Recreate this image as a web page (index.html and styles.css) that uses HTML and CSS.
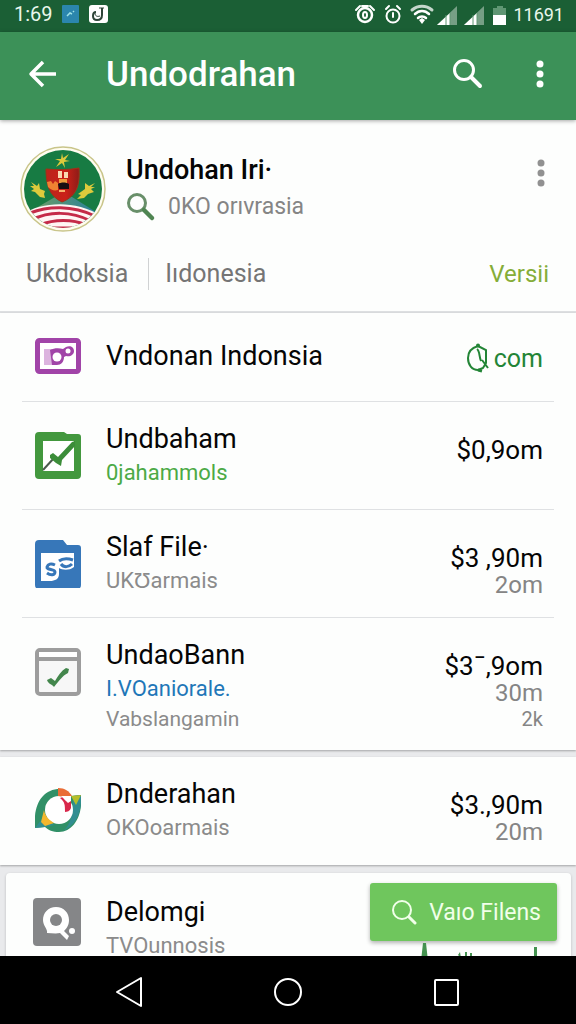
FILE: index.html
```html
<!DOCTYPE html>
<html lang="id">
<head>
    <meta charset="UTF-8">
    <meta name="viewport" content="width=device-width, initial-scale=1.0">
    <title>Undodrahan</title>
    <link rel="stylesheet" href="styles.css">
</head>
<body>
    <div class="status-bar">
        <span class="clock">1:69</span>
        <svg class="status-left" width="50" height="20" viewBox="0 0 50 20">
            <rect x="1" y="1" width="17" height="18" rx="1" fill="#2b86ad"/>
            <path d="M6 12l3-3 2 1M12 8l1-1" stroke="#9fe3e6" stroke-width="1.5" fill="none"/>
            <rect x="28" y="1" width="19" height="18" rx="3" fill="#fff"/>
            <path d="M41 4v7c0 3-2 5-5 5s-4-2-4-4 1-4 3-4" stroke="#2d4438" stroke-width="2" fill="none"/>
            <path d="M34 9c0 3 2 4 5 3M38 4h5" stroke="#2d4438" stroke-width="1" fill="none"/>
        </svg>
        <svg class="status-right" width="154" height="24" viewBox="0 0 154 24">
            <g fill="none" stroke="#fff" stroke-linecap="round">
                <circle cx="12" cy="13" r="7" stroke-width="2.5"/>
                <path d="M3 8l4-4M21 8l-4-4M9 4h6" stroke-width="2"/>
                <ellipse cx="12" cy="13" rx="2" ry="3" stroke-width="2"/>
                <circle cx="40" cy="14" r="6.500" stroke-width="2"/>
                <path d="M33 7l3-3M47 7l-3-3M40 11v4" stroke-width="2"/>
                <path d="M59 8c6-5 14-5 20 0" stroke-width="3" opacity=".75"/>
                <path d="M62 12c4-4 10-4 14 0M65 16c2-2 6-2 8 0" stroke-width="2.500"/>
            </g>
            <path d="M66 18l3-2 3 2-3 4z" fill="#fff"/>
            <path d="M104 4v19H84z" fill="#fff" opacity=".4"/>
            <path d="M97 11v12H84z" fill="#fff"/>
            <path d="M93 13v10M97 11v12" stroke="#5f9673" stroke-width="1"/>
            <path d="M131 4v19h-20z" fill="#fff" opacity=".4"/>
            <path d="M124 11v12h-13z" fill="#fff"/>
            <path d="M120 13v10M124 11v12" stroke="#5f9673" stroke-width="1"/>
            <path d="M140 6h4V4h6v2h3v8h-13z" fill="#5f9673"/>
            <path d="M140 13h13v10h-13z" fill="#fff"/>
        </svg>
        <span class="battery">11691</span>
    </div>

    <header class="app-bar">
        <button class="icon-btn" type="button" aria-label="Back">
            <svg width="30" height="30" viewBox="0 0 30 30" fill="none" stroke="#fff" stroke-width="3.500" stroke-linecap="round" stroke-linejoin="round"><path d="M15 3L3 15l12 12M4 15h24" stroke-linecap="butt"/></svg>
        </button>
        <h1>Undodrahan</h1>
        <button class="icon-btn" type="button" aria-label="Search">
            <svg width="32" height="32" viewBox="0 0 32 32" fill="none" stroke="#fff" stroke-linecap="round"><circle cx="12" cy="12" r="9.500" stroke-width="3"/><path d="M19 19l9 9" stroke-width="4"/></svg>
        </button>
        <button class="icon-btn more" type="button" aria-label="More options">
            <svg width="10" height="30" viewBox="0 0 10 30" fill="#fff"><circle cx="5" cy="5" r="3.500"/><circle cx="5" cy="15" r="3.500"/><circle cx="5" cy="25" r="3.500"/></svg>
        </button>
    </header>

    <main>
        <section class="profile">
            <div class="profile-top">
                <svg class="avatar" width="86" height="88" viewBox="0 0 86 88">
                    <defs>
                        <clipPath id="disc"><circle cx="43" cy="43" r="39"/></clipPath>
                        <linearGradient id="hill" x1="0" y1="0" x2="1" y2="0"><stop offset="0" stop-color="#6f9e62"/><stop offset="1" stop-color="#28819b"/></linearGradient>
                        <linearGradient id="shield" x1="0" y1="0" x2="1" y2="0"><stop offset="0" stop-color="#bb241c"/><stop offset=".6" stop-color="#cb2119"/><stop offset="1" stop-color="#8e1c18"/></linearGradient>
                    </defs>
                    <circle cx="43" cy="43" r="42" fill="#fffdf0" stroke="#c9c58a" stroke-width="1.500"/>
                    <g clip-path="url(#disc)">
                        <rect width="86" height="88" fill="#177b43"/>
                        <path d="M11 65l24-14h17l24 15v10H11z" fill="url(#hill)"/>
                        <path d="M0 70c15-12 54-20 86 3v12H0z" fill="#fff6f4"/>
                        <g fill="none" stroke="#c52b48" stroke-width="3">
                            <path d="M10 67c18-7 42-8 65 3M12 74c17-9 39-9 59 1M20 79c14-6 33-6 46 0"/>
                        </g>
                        <path d="M32 82h20" stroke="#c52b48" stroke-width="3"/>
                    </g>
                    <path d="M26 23c11 1 22 1 33-1 1 17-2 28-17 34-13-6-16-18-16-33z" fill="url(#shield)" stroke="#a13217"/>
                    <path d="M27 36l4-1 2 3 2-3 3 2v7c-4 1-7 0-10-3z" fill="#f08232"/>
                    <path d="M38 25h4v7h-4zM44 26h4v6h-4z" fill="#f9d9b2"/>
                    <path d="M39 33h8v4h-8z" fill="#ef9c3e"/>
                    <path d="M38 38c3-2 8-2 11 0v5H39z" fill="#190e13"/>
                    <path d="M39 44h6v2h-6z" fill="#f7b16c"/>
                    <g fill="#ddca3c">
                        <path d="M42 7l1 5 6-4-4 6 5 1-6 1 1 6-3-5-6 4 4-6-5-2 6 0z"/>
                        <path d="M11 36l6 4 2-3 1 6 5 2-1 3 1 4-5-1-5-5-4-1 3-2-4-3 4 0z"/>
                        <path d="M75 37l-6 3-4-3v6l-7 5 3 1-4 4 7-1 4-4 6-2-3-3 4-2h-4z"/>
                    </g>
                </svg>
                <div class="profile-name">
                    <h2>Undohan Iri·</h2>
                    <p>
                        <svg width="30" height="30" viewBox="0 0 30 30" fill="none" stroke="#688f69" stroke-linecap="round"><circle cx="11" cy="11" r="8.500" stroke-width="3"/><path d="M18 18l8 8" stroke-width="4.500" stroke="#4f8552"/></svg>
                        <span>0KO orıvrasia</span>
                    </p>
                </div>
                <button class="icon-btn profile-more" type="button" aria-label="Profile options">
                    <svg width="10" height="30" viewBox="0 0 10 30" fill="#919191"><circle cx="5" cy="5" r="3.500"/><circle cx="5" cy="15" r="3.500"/><circle cx="5" cy="25" r="3.500"/></svg>
                </button>
            </div>
            <div class="profile-meta">
                <span>Ukdoksia</span>
                <span class="region">Iıdonesia</span>
                <a href="#">Versii</a>
            </div>
        </section>

        <ul class="list">
            <li class="item single">
                <svg class="item-icon" width="46" height="36" viewBox="0 0 46 36">
                    <rect x="2.500" y="2.500" width="41" height="31" rx="2" fill="#fff" stroke="#a144a8" stroke-width="5"/>
                    <path d="M9 11h8v16H9z" fill="#dcb4df"/>
                    <path d="M15 12c4-2 9-2 13-1l3-2c4-2 8 0 8 4s-4 6-8 5l-2 1c0 5-3 8-7 8h-5z" fill="#a144a8"/>
                    <circle cx="22" cy="19" r="4.500" fill="#fff"/>
                    <circle cx="33" cy="13" r="2.500" fill="#fff"/>
                </svg>
                <div class="item-text"><h3>Vndonan Indonsia</h3></div>
                <div class="item-value site">
                    <svg width="24" height="30" viewBox="0 0 24 30" fill="none" stroke="#238536" stroke-width="2"><path d="M12 3l8 4v13l-3 5-5 2c-6 0-10-5-10-12C2 9 5 5 12 3M11 6c3 2 2 8 4 12M16 17l6 8"/><path d="M12 27l4 1" stroke-width="3"/><circle cx="12" cy="2.500" r="1"/></svg>
                    <span>com</span>
                </div>
            </li>
            <li class="item">
                <svg class="item-icon" width="46" height="48" viewBox="0 0 46 48">
                    <path d="M4 0h25l3 2h11q3 0 3 3v38q0 4-4 4H4q-4 0-4-4V4q0-4 4-4z" fill="#43983e"/>
                    <path d="M8 9h31v30H8z" fill="#fff"/>
                    <path d="M8 38l11-12" stroke="#4b5a4d" stroke-width="2"/>
                    <path d="M15 23l3-2 5 4 14-15 3-1v5L27 28l-1 6-5-3-6-5z" fill="#3c8d3a"/>
                </svg>
                <div class="item-text">
                    <h3>Undbaham</h3>
                    <p class="green">0jahammols</p>
                </div>
                <div class="item-value"><strong>$0,9om</strong></div>
            </li>
            <li class="item">
                <svg class="item-icon" width="46" height="48" viewBox="0 0 46 48">
                    <path d="M4 0h24l4 5h11q3 0 3 3v37q0 4-4 4H4q-4 0-4-4V4q0-4 4-4z" fill="#3777b9"/>
                    <path d="M6 13h33v14c-5 4-12 3-15 1v6c0 5-4 7-9 7H6z" fill="#fff"/>
                    <path d="M20 25c-4-2-7-1-8 2s8 2 8 5-4 4-8 1" fill="none" stroke="#3777b9" stroke-width="3"/>
                    <path d="M24 21c4-3 8-3 14-1M26 24c3 4 8 3 11 0" fill="none" stroke="#3777b9" stroke-width="3"/>
                </svg>
                <div class="item-text">
                    <h3>Slaf File·</h3>
                    <p>UKƱarmais</p>
                </div>
                <div class="item-value"><strong>$3 ,90m</strong><span>2om</span></div>
            </li>
            <li class="item">
                <svg class="item-icon" width="46" height="48" viewBox="0 0 46 48">
                    <rect x="2" y="2" width="42" height="44" rx="3" fill="#f7f7f7" stroke="#9d9d9d" stroke-width="4"/>
                    <path d="M4 4h38v5H4z" fill="#fff"/>
                    <path d="M3 11h40" stroke="#9d9d9d" stroke-width="4"/>
                    <path d="M12 32l4-2 4 3c3-5 6-10 11-13l3 1-1 4c-6 3-9 8-14 14-2-3-6-3-7-7z" fill="#43864c"/>
                </svg>
                <div class="item-text">
                    <h3>UndaoBann</h3>
                    <p class="blue">I.VOaniorale.</p>
                    <p class="note">Vabslangamin</p>
                </div>
                <div class="item-value"><strong>$3¯,9om</strong><span>30m</span><small>2k</small></div>
            </li>
        </ul>

        <ul class="list">
            <li class="item">
                <svg class="item-icon" width="46" height="46" viewBox="0 0 46 46">
                    <path d="M0 41C-2 18 7 2 25 2c4 0 8 2 11 7l10-1c2 20-7 37-22 37-6 0-11-2-14-5z" fill="#319067"/>
                    <path d="M0 41l10-13 9 10-9 2zM38 9l8-1c1 18-5 30-18 36 8-6 10-17 10-35z" fill="#318e91"/>
                    <circle cx="24" cy="23" r="14" fill="#fff"/>
                    <path d="M23 1c7 0 11 3 14 8l-7 1-7-1z" fill="#e96d36"/>
                    <path d="M36 9l10-1-5 10z" fill="#b6be29"/>
                    <path d="M25 11c4-2 8-1 11 2v8c-1 3-4 4-6 4 0-7 0-10-5-14z" fill="#d8274b"/>
                    <path d="M26 9h10v5l-3 2c-2-2-4-4-7-7z" fill="#fff"/>
                    <path d="M9 23c1 6 5 10 10 13l-9 3-4-4z" fill="#f3b72d"/>
                </svg>
                <div class="item-text">
                    <h3>Dnderahan</h3>
                    <p>OKOoarmais</p>
                </div>
                <div class="item-value"><strong>$3.,90m</strong><span>20m</span></div>
            </li>
        </ul>

        <section class="card">
            <svg class="card-icon" width="48" height="48" viewBox="0 0 48 48">
                <rect width="48" height="48" rx="4" fill="#858688"/>
                <path d="M23 9c8 0 13 6 13 13 0 6-3 9-5 11l5 5-2 4-7-7c-4 1-9 0-13 0 1-4-4-7-4-13 0-7 5-13 13-13z" fill="#fff"/>
                <circle cx="23" cy="22" r="6" fill="#858688"/>
                <circle cx="39" cy="33" r="3" fill="#fff"/>
            </svg>
            <div class="item-text">
                <h3>Delomgi</h3>
                <p>TVOunnosis</p>
            </div>
            <div class="card-action">
                <button class="view-btn" type="button">
                    <svg width="26" height="28" viewBox="0 0 26 28" fill="none" stroke="#f1ffe9" stroke-linecap="round"><circle cx="11" cy="12" r="9" stroke-width="2"/><path d="M18 19l6 6" stroke-width="3"/></svg>
                    Vaıo Filens
                </button>
                <svg class="peaks" width="130" height="20" viewBox="0 0 130 20" fill="#459250"><path d="M4 20L6 2h3l2 18zM41 14l2-3 1 6zM48 11h2v9h-2zM53 12h2v8h-2zM117 6h3v14h-3z"/></svg>
            </div>
        </section>
    </main>

    <nav class="nav-bar">
        <button type="button" aria-label="Back">
            <svg width="32" height="32" viewBox="0 0 32 32" fill="none" stroke="#fff" stroke-width="2" stroke-linejoin="round"><path d="M28 2v28L4 16z"/></svg>
        </button>
        <button type="button" aria-label="Home">
            <svg width="32" height="32" viewBox="0 0 32 32" fill="none" stroke="#fff" stroke-width="2"><circle cx="16" cy="16" r="13"/></svg>
        </button>
        <button type="button" aria-label="Recent apps">
            <svg width="32" height="32" viewBox="0 0 32 32" fill="none" stroke="#fff" stroke-width="2"><rect x="4" y="4" width="23" height="25" rx="1"/></svg>
        </button>
    </nav>
</body>
</html>
```

FILE: styles.css
```css
* {
    box-sizing: border-box;
    margin: 0;
    padding: 0;
}

body {
    display: flex;
    flex-direction: column;
    height: 100vh;
    font-family: Roboto, Arial, sans-serif;
    background: #e9eaec;
    color: #050505;
}

svg {
    display: block;
    flex-shrink: 0;
}

button {
    border: none;
    background: none;
    font-family: inherit;
    cursor: pointer;
}

.status-bar {
    display: flex;
    align-items: center;
    flex-shrink: 0;
    height: 32px;
    padding: 0 12px 4px 14px;
    background: #1b5f35;
    color: #e9f7ec;
    font-size: 20px;
}

.clock {
    margin-right: 8px;
}

.status-right {
    margin-left: auto;
    margin-right: 6px;
}

.battery {
    font-size: 18px;
}

.app-bar {
    display: flex;
    align-items: center;
    flex-shrink: 0;
    height: 88px;
    padding: 0 20px 4px 28px;
    background: #3c9158;
    color: #fff;
    box-shadow: 0 1px 4px rgba(0, 0, 0, 0.35);
    z-index: 1;
}

.app-bar h1 {
    flex: 1;
    margin-left: 48px;
    font-size: 35px;
    font-weight: 500;
}

.more {
    padding: 0 11px;
    margin-left: 40px;
}

main {
    flex: 1;
    min-height: 0;
    overflow-y: auto;
    scrollbar-width: none;
}

.profile {
    background: #fdfefd;
    border-bottom: 2px solid #dddfe1;
    padding: 26px 27px 21px 20px;
}

.profile-top {
    display: flex;
}

.profile-name {
    flex: 1;
    margin-left: 20px;
    padding-top: 6px;
}

.profile-name h2 {
    font-size: 27px;
    font-weight: 500;
    line-height: 36px;
}

.profile-name p {
    display: flex;
    align-items: center;
    gap: 12px;
    font-size: 23px;
    line-height: 38px;
    color: #858585;
}

.profile-more {
    align-self: flex-start;
    padding: 12px 3px;
}

.profile-meta {
    display: flex;
    align-items: center;
    margin-top: 24px;
    padding-left: 6px;
    font-size: 25px;
    line-height: 32px;
    color: #757575;
}

.region {
    margin-left: 20px;
    padding-left: 16px;
    border-left: 1px solid #d0d2d3;
}

.profile-meta a {
    margin-left: auto;
    color: #85ad38;
    font-size: 24px;
    text-decoration: none;
}

.list {
    list-style: none;
    padding: 0 22px;
    margin-bottom: 7px;
    background: #fdfefd;
    box-shadow: 0 1px 2px rgba(0, 0, 0, 0.3);
}

.item {
    display: flex;
    min-height: 108px;
    padding: 20px 11px 18px 13px;
    border-bottom: 1px solid #dfe1e3;
}

.item:last-child {
    border-bottom: none;
}

.item.single {
    align-items: center;
    min-height: 0;
    padding-top: 25px;
    padding-bottom: 27px;
}

.item-icon {
    margin-top: 10px;
}

.single .item-icon {
    margin-top: 0;
}

.item-text {
    flex: 1;
    margin-left: 25px;
}

h3 {
    font-size: 27px;
    font-weight: 400;
    line-height: 34px;
}

.item-text p {
    font-size: 22px;
    line-height: 34px;
    color: #8b8b8b;
}

.item-text .green {
    color: #4caa46;
}

.item-text .blue {
    color: #1f77b8;
}

.item-text .note {
    font-size: 21px;
    line-height: 26px;
}

.item-value {
    display: flex;
    flex-direction: column;
    align-items: flex-end;
    padding-top: 14px;
    font-size: 24px;
    line-height: 27px;
    color: #858585;
}

.item-value strong {
    font-size: 26px;
    font-weight: 400;
    line-height: 28px;
    color: #050505;
}

.item-value small {
    font-size: 20px;
    line-height: 25px;
}

.item-value.site {
    flex-direction: row;
    align-items: center;
    gap: 4px;
    padding-top: 4px;
    font-size: 25px;
    color: #238536;
}

.card {
    display: flex;
    margin: 8px 5px 0 6px;
    padding: 22px 14px 20px 27px;
    background: #fdfefd;
    border-radius: 4px;
    box-shadow: 0 1px 3px rgba(0, 0, 0, 0.2);
}

.card-icon {
    margin-top: 3px;
}

.card-action {
    display: flex;
    flex-direction: column;
    align-items: flex-end;
    margin-top: -12px;
}

.view-btn {
    display: flex;
    align-items: center;
    gap: 12px;
    height: 58px;
    padding: 0 16px 0 21px;
    background: #6fc65d;
    color: #f1ffe9;
    border-radius: 3px;
    box-shadow: 0 2px 4px rgba(0, 0, 0, 0.3);
    font-size: 23px;
}

.peaks {
    margin-right: 10px;
}

.nav-bar {
    display: flex;
    justify-content: center;
    align-items: center;
    flex-shrink: 0;
    gap: 22%;
    height: 68px;
    padding-top: 4px;
    background: #000;
}
```
